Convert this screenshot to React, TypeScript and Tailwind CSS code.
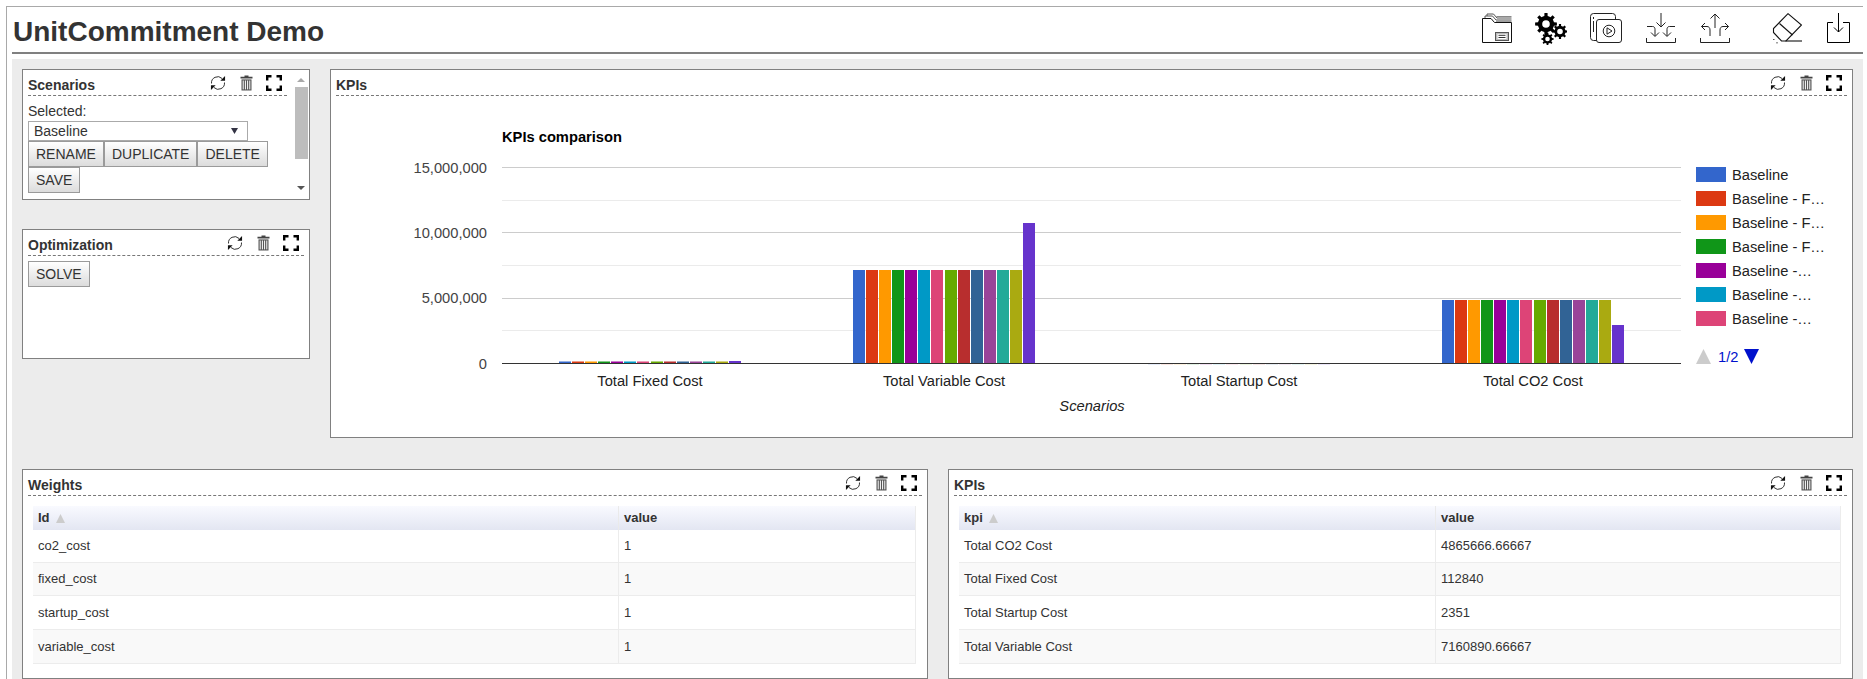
import React from 'react'

const COLORS = ['#3366cc', '#dc3912', '#ff9900', '#109618', '#990099', '#0099c6', '#dd4477', '#66aa00', '#b82e2e', '#316395', '#994499', '#22aa99', '#aaaa11', '#6633cc']

const gearPath = (cx: number, cy: number, r: number, teeth: number) => {
   const pts: string[] = []
   const step = (Math.PI * 2) / teeth
   for (let i = 0; i < teeth; i++) {
      const a = i * step
      const inner = r * 0.74
      const list: [number, number][] = [
         [a - step * 0.5, inner],
         [a - step * 0.26, inner],
         [a - step * 0.18, r],
         [a + step * 0.18, r],
         [a + step * 0.26, inner],
      ]
      list.forEach(([t, d]) => pts.push(`${(cx + Math.cos(t) * d).toFixed(2)} ${(cy + Math.sin(t) * d).toFixed(2)}`))
   }
   return `M${pts.join('L')}Z`
}

const RefreshIcon = () => (
   <svg width="16" height="16" viewBox="0 0 17 16" fill="none">
      <path d="M1.6 8.5A6.6 6.6 0 0 1 12.8 3.2" stroke="#222" strokeWidth="1" />
      <path d="M15.4 7.5A6.6 6.6 0 0 1 4.2 12.8" stroke="#222" strokeWidth="1" />
      <path d="M16 0.5V5.6H11Z" fill="#111" />
      <path d="M1 15.5V10.4H6Z" fill="#111" />
   </svg>
)

const TrashIcon = () => (
   <svg width="13" height="16" viewBox="0 0 13 16">
      <path d="M4.5 0.5H8.5V1.8H12.5V3.6H0.5V1.8H4.5Z" fill="#444" />
      <path d="M1.5 4.4H11.5V15.5H1.5Z" fill="#555" />
      <path d="M3.2 5.5V14.4M5.4 5.5V14.4M7.6 5.5V14.4M9.8 5.5V14.4" stroke="#fff" strokeWidth="1" />
   </svg>
)

const FullIcon = () => (
   <svg width="16" height="16" viewBox="0 0 16 16" fill="none" stroke="#000" strokeWidth="2.4">
      <path d="M1.2 5.5V1.2H5.5" />
      <path d="M10.5 1.2H14.8V5.5" />
      <path d="M14.8 10.5V14.8H10.5" />
      <path d="M5.5 14.8H1.2V10.5" />
   </svg>
)

const FolderIcon = () => (
   <svg width="30" height="30" viewBox="0 0 30 30" fill="none" stroke="#111" strokeWidth="1">
      <path d="M0.5 29.5V5.5H9L12.5 9.5H29.5V29.5Z" fill="#fff" />
      <path d="M3 5V3H10.5L14 7H29.5" stroke="#555" />
      <path d="M5 3V1H11.5L15 5H29.5" stroke="#555" />
      <path d="M14.5 3.5H29.5M14 8.3H29.5" stroke="#888" />
      <rect x="13.5" y="19.5" width="13" height="8" fill="#bbb" stroke="#555" />
      <rect x="15.5" y="21" width="9" height="5" fill="#fff" stroke="none" />
      <path d="M16.5 22.3H23.5M16.5 24.5H23.5" stroke="#333" />
   </svg>
)

const GearsIcon = () => (
   <svg width="32" height="32" viewBox="0 0 32 32">
      <path fillRule="evenodd" d={`${gearPath(11, 11, 11, 8)}M11 7.2A3.8 3.8 0 1 0 11 14.8A3.8 3.8 0 1 0 11 7.2Z`} fill="#000" />
      <path fillRule="evenodd" d={`${gearPath(25, 18.5, 7.5, 8)}M25 15.7A2.8 2.8 0 1 0 25 21.3A2.8 2.8 0 1 0 25 15.7Z`} fill="#000" />
      <path fillRule="evenodd" d={`${gearPath(12.5, 26, 6.2, 8)}M12.5 23.7A2.3 2.3 0 1 0 12.5 28.3A2.3 2.3 0 1 0 12.5 23.7Z`} fill="#000" />
   </svg>
)

const MediaIcon = () => (
   <svg width="32" height="30" viewBox="0 0 32 30" fill="none" stroke="#222" strokeWidth="1">
      <rect x="0.5" y="0.5" width="25" height="27" rx="3" />
      <path d="M3.5 4V6M3.5 8V19" strokeWidth="1" />
      <rect x="6.5" y="6.5" width="25" height="23" rx="2.5" fill="#fff" />
      <circle cx="19" cy="18" r="5.8" />
      <path d="M17 14.8V21.2L22 18Z" />
   </svg>
)

const ImportIcon = () => (
   <svg width="30" height="30" viewBox="0 0 30 30" fill="none" stroke="#222" strokeWidth="1">
      <path d="M15 0V14M10.5 9.5L15 14L19.5 9.5" />
      <path d="M1 13.5H6.5C8.5 13.5 9 15 9 16.5V23M5 19.5L9 23.5L13 19.5" />
      <path d="M29 13.5H23.5C21.5 13.5 21 15 21 16.5V23M17 19.5L21 23.5L25 19.5" />
      <path d="M0.5 25V29.5H29.5V25" />
   </svg>
)

const ExportIcon = () => (
   <svg width="30" height="30" viewBox="0 0 30 30" fill="none" stroke="#222" strokeWidth="1">
      <path d="M15 15V1M10.5 5.5L15 1L19.5 5.5" />
      <path d="M10 23V17C10 15 9 13.5 7 13.5H1.5M5 10L1.5 13.5L5 17" />
      <path d="M20 23V17C20 15 21 13.5 23 13.5H28.5M25 10L28.5 13.5L25 17" />
      <path d="M0.5 25V29.5H29.5V25" />
   </svg>
)

const EraserIcon = () => (
   <svg width="30" height="31" viewBox="0 0 30 31" fill="none" stroke="#111" strokeWidth="1.1">
      <path d="M16 0.7L29.5 12L14 28H9.5L1.5 19.5V15.5Z" />
      <path d="M7.5 10.5L20.5 22" />
      <path d="M13.5 28H30" />
      <path d="M1 26.5H2.5M5 29V30.5" stroke="#555" />
   </svg>
)

const SaveBoxIcon = () => (
   <svg width="23" height="30" viewBox="0 0 23 30" fill="none" stroke="#000" strokeWidth="1">
      <path d="M6 9.5H0.5V29.5H22.5V9.5H16" />
      <path d="M11.5 0V19M7 14.5L11.5 19L16 14.5" />
   </svg>
)

const Card = ({ title, className, scroll, children }: { title: string; className: string; scroll?: boolean; children: React.ReactNode }) => (
   <section className={`flex min-w-0 border border-[#808080] bg-white ${className}`}>
      <div className={`min-w-0 flex-1 pl-[5px] ${scroll ? 'pr-[6px]' : 'pr-[5px]'}`}>
         <header className="flex h-[26px] items-start justify-between border-b border-dashed border-[#777]">
            <h2 className="pt-[6px] text-[14px] font-bold leading-[18px] text-[#333]">{title}</h2>
            <div className="flex items-start pr-[5px] pt-[5px]">
               <RefreshIcon />
               <div className="ml-[14px]">
                  <TrashIcon />
               </div>
               <div className="ml-[13px]">
                  <FullIcon />
               </div>
            </div>
         </header>
         {children}
      </div>
      {scroll && (
         <div className="flex w-[16px] shrink-0 flex-col items-center">
            <svg className="mt-[7px]" width="10" height="6" viewBox="0 0 10 6">
               <path d="M5 1L9 5H1Z" fill="#a8a8a8" />
            </svg>
            <div className="mt-[4px] h-[72px] w-[13px] bg-[#bdbdbd]" />
            <svg className="mt-[26px]" width="10" height="6" viewBox="0 0 10 6">
               <path d="M1 1H9L5 5Z" fill="#555" />
            </svg>
         </div>
      )}
   </section>
)

const Btn = ({ label }: { label: string }) => (
   <button className="h-[26px] border border-[#9a9a9a] bg-gradient-to-b from-white to-[#dcdcdc] px-[7px] text-[14px] leading-none text-[#333]">{label}</button>
)

const rowHeights = ['h-[33px]', 'h-[33px]', 'h-[34px]', 'h-[34px]']

const DataTable = ({ head, rows, firstCol }: { head: string; rows: [string, string][]; firstCol: string }) => (
   <div className="ml-[5px] mr-[6px] mt-[10px] border-r border-[#ececec] text-[13px] text-[#333]">
      <div className="flex h-[24px] items-center bg-gradient-to-b from-[#f9faff] to-[#e3e6f2] font-bold">
         <div className={`flex h-full items-center gap-[6px] border-r border-[#eaeaea] pl-[5px] ${firstCol}`}>
            {head}
            <svg width="9" height="9" viewBox="0 0 9 9">
               <path d="M4.5 0L9 9H0Z" fill="#ccc" />
            </svg>
         </div>
         <div className="pl-[5px]">value</div>
      </div>
      {rows.map(([name, value], i) => (
         <div key={name} className={`flex items-center border-b border-[#ececec] ${rowHeights[i]} ${i % 2 ? 'bg-[#f9f9f9]' : 'bg-white'}`}>
            <div className={`flex h-full items-center border-r border-[#ececec] pl-[5px] ${firstCol}`}>{name}</div>
            <div className="pl-[5px]">{value}</div>
         </div>
      ))}
   </div>
)

const KpiChart = () => {
   const groups = [
      { start: 559, h: [1.5, 1.5, 2] },
      { start: 853, h: [93, 93, 140] },
      { start: 1148, h: [0, 0, 0] },
      { start: 1442, h: [63, 63, 38] },
   ]
   const legend = ['Baseline', 'Baseline - F…', 'Baseline - F…', 'Baseline - F…', 'Baseline -…', 'Baseline -…', 'Baseline -…']
   return (
      <svg width="1521" height="342" viewBox="331 96 1521 342" className="block" fontSize="14.7">
         <text x="502" y="142" fontWeight="700" fill="#000">
            KPIs comparison
         </text>
         {[200, 265, 330].map((y) => (
            <rect key={y} x="502" y={y} width="1179" height="1" fill="#ebebeb" />
         ))}
         {[167, 232, 298].map((y) => (
            <rect key={y} x="502" y={y} width="1179" height="1" fill="#cccccc" />
         ))}
         {[
            ['15,000,000', 173],
            ['10,000,000', 238],
            ['5,000,000', 303],
            ['0', 369],
         ].map(([t, y]) => (
            <text key={t} x="487" y={y} textAnchor="end" fill="#444">
               {t}
            </text>
         ))}
         {groups.map((g) =>
            COLORS.map((c, i) => {
               const x = Math.round(g.start + i * 13.08)
               const h = i === 13 ? g.h[2] : g.h[0]
               if (h === 0) return <rect key={`${g.start}-${i}`} x={x} y="364" width="12" height="1" fill={c} opacity="0.12" />
               return <rect key={`${g.start}-${i}`} x={x} y={363 - h} width="12" height={h} fill={c} />
            })
         )}
         <rect x="502" y="363" width="1179" height="1" fill="#333" />
         {[
            ['Total Fixed Cost', 650],
            ['Total Variable Cost', 944],
            ['Total Startup Cost', 1239],
            ['Total CO2 Cost', 1533],
         ].map(([t, x]) => (
            <text key={t} x={x} y="386" textAnchor="middle" fill="#222">
               {t}
            </text>
         ))}
         <text x="1092" y="411" textAnchor="middle" fontStyle="italic" fill="#222">
            Scenarios
         </text>
         {legend.map((t, i) => (
            <g key={i}>
               <rect x="1696" y={167 + i * 24} width="30" height="15" fill={COLORS[i]} />
               <text x="1732" y={180 + i * 24} fill="#222">
                  {t}
               </text>
            </g>
         ))}
         <path d="M1696 364L1703.5 349L1711 364Z" fill="#ccc" />
         <text x="1718" y="362" fill="#0011cc">
            1/2
         </text>
         <path d="M1744 349H1759L1751.5 364Z" fill="#0011cc" />
      </svg>
   )
}

const App = () => {
   return (
      <div className="h-[679px] w-[1867px] overflow-hidden bg-white pl-[6px] pt-[6px] font-['Liberation_Sans',Arial,sans-serif]">
         <div className="h-[673px] w-[1857px] border-l border-t border-[#a9a9a9] pl-[5px]">
            <div className="flex h-[47px] items-start border-b-[2px] border-[#808080] pr-[13px]">
               <h1 className="pl-px pt-[8px] text-[28px] font-bold leading-[34px] text-[#333]">UnitCommitment Demo</h1>
               <div className="ml-auto flex items-start pt-[6px]">
                  <FolderIcon />
                  <div className="ml-[23px]">
                     <GearsIcon />
                  </div>
                  <div className="ml-[23px]">
                     <MediaIcon />
                  </div>
                  <div className="ml-[24px]">
                     <ImportIcon />
                  </div>
                  <div className="ml-[24px]">
                     <ExportIcon />
                  </div>
                  <div className="ml-[42px]">
                     <EraserIcon />
                  </div>
                  <div className="ml-[25px]">
                     <SaveBoxIcon />
                  </div>
               </div>
            </div>
            <main className="mt-[5px] h-[640px] bg-[#ececec] pl-[10px] pr-[10px] pt-[10px]">
               <div className="flex gap-[20px]">
                  <div className="flex w-[288px] shrink-0 flex-col gap-[29px]">
                     <Card title="Scenarios" className="h-[131px]" scroll>
                        <div className="flex h-[25px] items-end pb-[1px] pl-0 text-[14px] leading-[18px] text-[#333]">Selected:</div>
                        <div className="flex h-[20px] w-[220px] items-center justify-between border border-[#aaa] pl-[5px] pr-[9px] text-[14px] text-[#333]">
                           Baseline
                           <svg width="7" height="6" viewBox="0 0 7 6">
                              <path d="M0 0H7L3.5 6Z" fill="#334" />
                           </svg>
                        </div>
                        <div className="flex flex-wrap">
                           <Btn label="RENAME" />
                           <Btn label="DUPLICATE" />
                           <Btn label="DELETE" />
                           <Btn label="SAVE" />
                        </div>
                     </Card>
                     <Card title="Optimization" className="h-[130px]">
                        <div className="pt-[5px]">
                           <Btn label="SOLVE" />
                        </div>
                     </Card>
                  </div>
                  <Card title="KPIs" className="h-[369px] flex-1">
                     <div className="-mx-[5px]">
                        <KpiChart />
                     </div>
                  </Card>
               </div>
               <div className="mt-[31px] flex gap-[20px]">
                  <Card title="Weights" className="h-[210px] w-[906px] shrink-0">
                     <DataTable
                        head="Id"
                        firstCol="w-[586px]"
                        rows={[
                           ['co2_cost', '1'],
                           ['fixed_cost', '1'],
                           ['startup_cost', '1'],
                           ['variable_cost', '1'],
                        ]}
                     />
                  </Card>
                  <Card title="KPIs" className="h-[210px] flex-1">
                     <DataTable
                        head="kpi"
                        firstCol="w-[477px]"
                        rows={[
                           ['Total CO2 Cost', '4865666.66667'],
                           ['Total Fixed Cost', '112840'],
                           ['Total Startup Cost', '2351'],
                           ['Total Variable Cost', '7160890.66667'],
                        ]}
                     />
                  </Card>
               </div>
            </main>
         </div>
      </div>
   )
}

export default App
